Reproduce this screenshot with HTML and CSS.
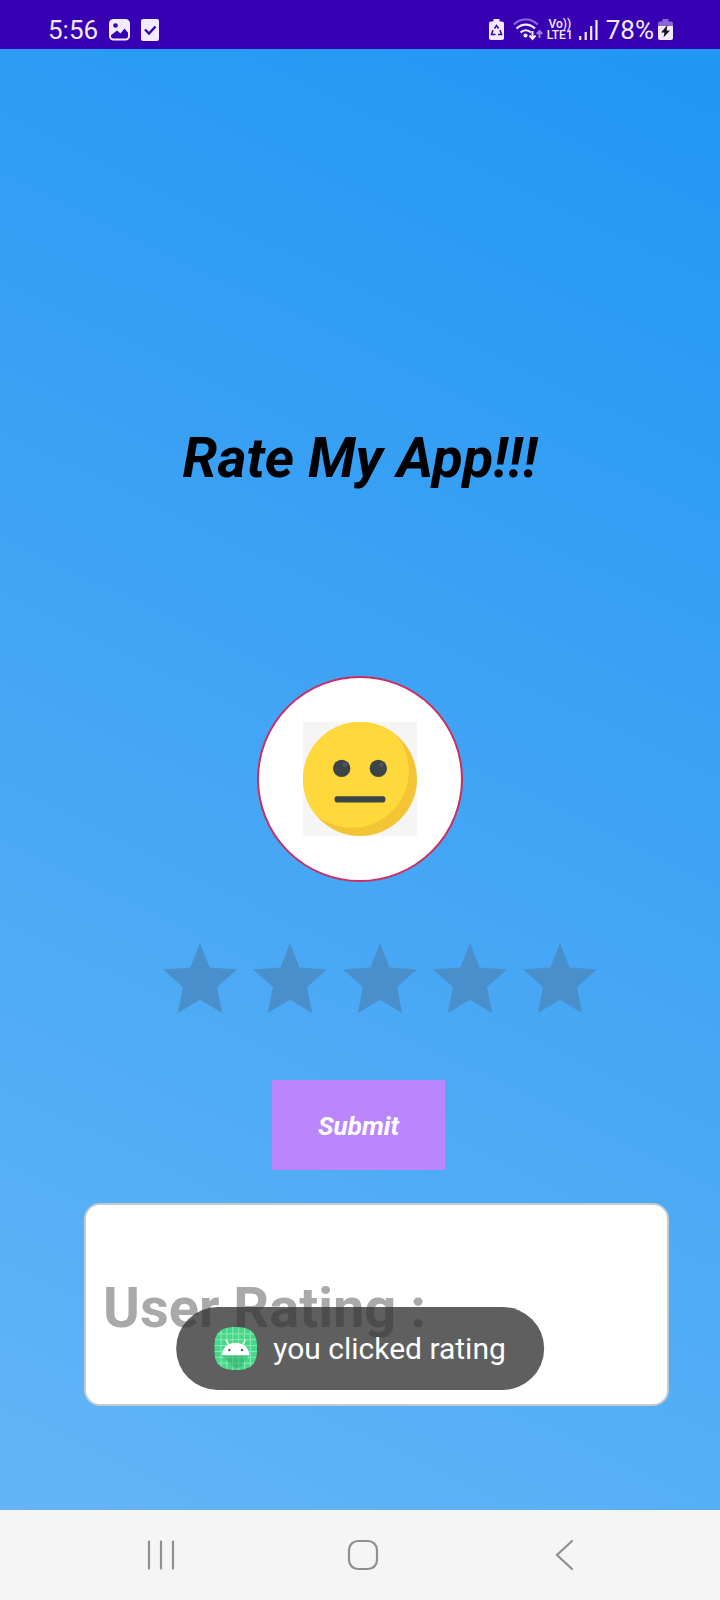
FILE: index.html
```
<!DOCTYPE html>
<html lang="en">
<head>
<meta charset="utf-8">
<meta name="viewport" content="width=device-width, initial-scale=1">
<title>Rate My App</title>
<link rel="stylesheet" href="styles.css">
</head>
<body>
<div class="screen">
  <header class="status">
    <div class="status-group status-left">
      <span class="clock">5:56</span>
      <svg class="picture-icon" width="21" height="22" viewBox="0 0 21 22" aria-hidden="true">
        <path d="M1 4.500A3.500 3.500 0 0 1 4.500 1h12A3.500 3.500 0 0 1 20 4.500V15l-4.500-5.500-4 5L8 11.500 1 17z" fill="#f3ebff"/>
        <rect x="1" y="1" width="19" height="19.500" rx="3.500" fill="none" stroke="#f3ebff" stroke-width="2"/>
        <circle cx="6.500" cy="6.500" r="2.300" fill="#3700b3"/>
      </svg>
      <svg class="check-icon" width="18" height="22" viewBox="0 0 18 22" aria-hidden="true">
        <rect width="18" height="22" rx="2" fill="#f3ebff"/>
        <path d="M4 10.500l4 4 6.500-7" fill="none" stroke="#3700b3" stroke-width="2.400"/>
      </svg>
    </div>
    <div class="status-group status-right">
      <svg width="15" height="22" viewBox="0 0 15 22" aria-hidden="true">
        <path d="M4.500 0h6v2.500H13a2 2 0 0 1 2 2V19a2 2 0 0 1-2 2H2a2 2 0 0 1-2-2V4.500a2 2 0 0 1 2-2h2.500z" fill="#f3ebff"/>
        <path d="M5.500 9.500L7.500 6.500l2 3M11 11l1.500 4.500H9M6.500 15.500h-4L4 11" fill="none" stroke="#3700b3" stroke-width="1.500"/>
      </svg>
      <svg class="wifi-icon" width="30" height="24" viewBox="0 0 30 24" aria-hidden="true">
        <g fill="none" stroke-width="2.200">
          <path d="M.8 6.500C7.500-.2 18-.2 24.700 6.500" stroke="#8a67d4"/>
          <path d="M3.500 10.500c5.500-5.300 13-5.300 18.500 0M7.500 14.500c3-3 7.500-3 10.500 0" stroke="#f3ebff"/>
        </g>
        <circle cx="12.500" cy="17.500" r="2.100" fill="#f3ebff"/>
        <path d="M19.500 13v7.500m-3-3l3 3.500 3-3.500" fill="none" stroke="#f3ebff" stroke-width="2"/>
        <path d="M26.500 20v-7m-2.700 3l2.700-3 2.700 3" fill="none" stroke="#9c7ddc" stroke-width="2"/>
      </svg>
      <span class="carrier"><span>Vo))</span><span>LTE1</span></span>
      <svg class="signal-icon" width="19" height="20" viewBox="0 0 19 20" aria-hidden="true">
        <path d="M1.200 16v4M6.700 12v8M12.200 6v14M17.500 0v20" stroke="#f3ebff" stroke-width="2.200"/>
      </svg>
      <span class="percent">78%</span>
      <svg class="charge-icon" width="15" height="22" viewBox="0 0 15 22" aria-hidden="true">
        <path d="M4.500 0h6v2.500H13a2 2 0 0 1 2 2V8H0V4.500a2 2 0 0 1 2-2h2.500z" fill="#8a67d4"/>
        <path d="M0 7h15v12a2 2 0 0 1-2 2H2a2 2 0 0 1-2-2z" fill="#f3ebff"/>
        <path d="M9.500 6L3 13.500h3.500L5.500 18.500 12 11.500H8.500z" fill="#14101f"/>
      </svg>
    </div>
  </header>

  <main class="content">
    <h1 class="title">Rate My App!!!</h1>
    <div class="face">
      <svg width="114" height="114" viewBox="0 0 112 112" role="img" aria-label="Neutral face">
        <defs><clipPath id="head"><circle cx="56" cy="56" r="56"/></clipPath></defs>
        <rect width="112" height="112" fill="#f5f5f5"/>
        <circle cx="56" cy="56" r="56" fill="#f3c534"/>
        <circle cx="48" cy="48" r="56" fill="#ffd83b" clip-path="url(#head)"/>
        <g fill="#3b4446">
          <circle cx="38" cy="45.500" r="8.500"/>
          <circle cx="74" cy="45.500" r="8.500"/>
          <rect x="31" y="73" width="50" height="6" rx="2.500"/>
        </g>
        <g fill="#50595c"><circle cx="41" cy="42" r="2.200"/><circle cx="77" cy="42" r="2.200"/></g>
      </svg>
    </div>
    <div class="stars" role="radiogroup" aria-label="Rating">
      <input class="star" type="radio" name="rating" value="1" aria-label="1 star">
      <input class="star" type="radio" name="rating" value="2" aria-label="2 stars">
      <input class="star" type="radio" name="rating" value="3" aria-label="3 stars">
      <input class="star" type="radio" name="rating" value="4" aria-label="4 stars">
      <input class="star" type="radio" name="rating" value="5" aria-label="5 stars">
    </div>
    <button class="submit" type="button">Submit</button>
    <section class="card"><p class="card-text">User Rating :</p></section>
    <div class="toast" role="status">
      <svg width="43" height="43" viewBox="0 0 44 44" aria-hidden="true">
        <defs><clipPath id="tile"><path d="M22 0C38 0 44 6 44 22S38 44 22 44 0 38 0 22 6 0 22 0z"/></clipPath></defs>
        <g clip-path="url(#tile)">
          <rect width="44" height="44" fill="#45d987"/>
          <path d="M7 0v44M13 0v44M19 0v44M25 0v44M31 0v44M37 0v44M0 7h44M0 13h44M0 19h44M0 25h44M0 31h44M0 37h44" stroke="#8cebb6" stroke-width="1"/>
          <path d="M8 29l10 11q5 4 10 0l6-9v-2z" fill="#28a864" opacity=".5"/>
        </g>
        <path d="M8 29a14 13 0 0 1 28 0z" fill="#fff"/>
        <path d="M15 18l-3-5M29 18l3-5" stroke="#fff" stroke-width="1.200"/>
        <circle cx="15.500" cy="23.500" r="1.300" fill="#4b6b59"/>
        <circle cx="28.500" cy="23.500" r="1.300" fill="#4b6b59"/>
      </svg>
      <span>you clicked rating</span>
    </div>
  </main>

  <nav class="navbar" aria-label="System navigation">
    <button class="nav-button" type="button" aria-label="Recent apps">
      <svg width="30" height="32" viewBox="0 0 30 32"><path d="M3 2.500v27M15 2.500v27M27 2.500v27"/></svg>
    </button>
    <button class="nav-button" type="button" aria-label="Home">
      <svg width="32" height="32" viewBox="0 0 32 32"><rect x="2" y="2" width="28" height="28" rx="9"/></svg>
    </button>
    <button class="nav-button" type="button" aria-label="Back">
      <svg width="20" height="32" viewBox="0 0 20 32"><path d="M17 2L2 16l15 14"/></svg>
    </button>
  </nav>
</div>
</body>
</html>
```
FILE: styles.css
```
* {
  box-sizing: border-box;
}

body {
  margin: 0;
  font-family: Roboto, "Liberation Sans", sans-serif;
}

.screen {
  display: flex;
  flex-direction: column;
  min-height: 100vh;
}

.status {
  display: flex;
  justify-content: space-between;
  align-items: center;
  height: 49px;
  padding: 11px 47px 0 48px;
  background: #3700b3;
  color: #f3ebff;
  font-size: 26px;
  line-height: 30px;
}

.status-group {
  display: flex;
  align-items: center;
}

.status-left {
  gap: 11px;
}

.status-right {
  gap: 4px;
}

.wifi-icon {
  margin-left: 5px;
}

.carrier {
  display: flex;
  flex-direction: column;
  align-items: center;
  margin-right: 2px;
  font-size: 12px;
  font-weight: 500;
  line-height: 11px;
}

.percent {
  margin-left: 4px;
}

.content {
  position: relative;
  flex: 1;
  display: flex;
  flex-direction: column;
  align-items: center;
  padding: 376px 51px 104px 84px;
  background: linear-gradient(26deg, #64b5f6, #42a5f5, #2196f3);
}

.title {
  margin: 0 33px 0 0;
  color: #000;
  font-size: 56px;
  font-style: italic;
  font-weight: 700;
  line-height: 66px;
}

.face {
  display: flex;
  align-items: center;
  justify-content: center;
  width: 206px;
  height: 206px;
  margin: 185px 33px 61px 0;
  border: 2px solid #cb2e60;
  border-radius: 50%;
  background: #fff;
}

.stars {
  display: flex;
  gap: 16px;
  margin-left: 7px;
}

.star {
  appearance: none;
  width: 74px;
  height: 70px;
  margin: 0;
  background: #488fcc;
  clip-path: polygon(50% 0, 63% 35%, 100% 38%, 73% 63%, 80% 100%, 50% 81%, 20% 100%, 27% 63%, 0 38%, 37% 35%);
  cursor: pointer;
}

.submit {
  width: 173px;
  height: 90px;
  margin: 67px 36px 33px 0;
  padding: 2px 0 0;
  border: 0;
  background: #bb86fc;
  color: #fff;
  font: italic 700 26px/30px Roboto, "Liberation Sans", sans-serif;
}

.card {
  align-self: stretch;
  padding: 70px 17px 63px;
  border: 2px solid #c3cbd1;
  border-radius: 16px;
  background: #fff;
}

.card-text {
  margin: 0;
  color: #a9a9aa;
  font-size: 56px;
  font-weight: 700;
  line-height: 66px;
}

.toast {
  position: absolute;
  bottom: 120px;
  left: 50%;
  transform: translateX(-50%);
  display: flex;
  align-items: center;
  gap: 16px;
  height: 83px;
  padding: 0 38px;
  border-radius: 42px;
  background: rgba(50, 50, 50, 0.78);
  color: #fff;
  font-size: 30px;
  line-height: 36px;
  white-space: nowrap;
}

.navbar {
  display: grid;
  grid-template-columns: repeat(3, 1fr);
  align-items: center;
  justify-items: center;
  height: 90px;
  padding: 0 54px 0 60px;
  background: #f5f5f5;
}

.nav-button {
  display: flex;
  justify-content: center;
  width: 80px;
  padding: 0;
  border: 0;
  background: none;
}

.nav-button svg {
  fill: none;
  stroke: #8f8f8f;
  stroke-width: 2.2;
  stroke-linecap: round;
}
```
